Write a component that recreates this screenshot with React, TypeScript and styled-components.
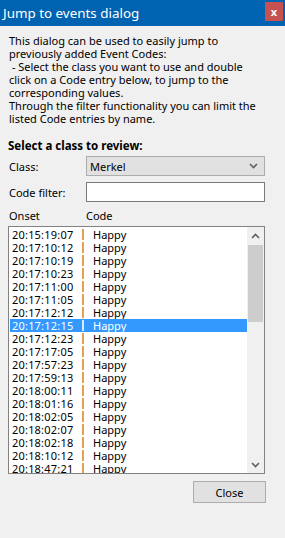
import React from "react";
import styled, { createGlobalStyle } from "styled-components";

const Global = createGlobalStyle`
  html, body { margin: 0; padding: 0; background: #f0f0f0; }
  body { font-family: "Noto Sans", "Open Sans", sans-serif; font-size: 11px; color: #000; }
  * { box-sizing: border-box; }
`;

const Window = styled.div`
  width: 285px;
  height: 538px;
  background: #f0f0f0;
  display: flex;
  flex-direction: column;
  overflow: hidden;
`;

const TitleBar = styled.div`
  height: 26px;
  background: #0063b1;
  display: flex;
  align-items: center;
  justify-content: space-between;
  padding: 0 2px 0 3px;
`;

const Title = styled.div`
  color: #fff;
  font-size: 13.4px;
  line-height: 18px;
`;

const CloseX = styled.div`
  width: 18px;
  height: 19px;
  margin-top: -4px;
  background: #c75050;
  color: #fff;
  font-weight: bold;
  font-size: 11px;
  display: flex;
  align-items: center;
  justify-content: center;
`;

const Body = styled.div`
  display: flex;
  flex-direction: column;
  padding: 8px 20px 0 8px;
`;

const Description = styled.p`
  margin: 0 0 0 1px;
  line-height: 13px;
  white-space: pre-wrap;
`;

const Heading = styled.div`
  margin-top: 14px;
  font-weight: bold;
  font-size: 11.5px;
  line-height: 13px;
`;

const FieldRow = styled.div<{ $gap: number }>`
  display: flex;
  align-items: center;
  margin-top: ${(p) => p.$gap}px;
`;

const Label = styled.div`
  width: 78px;
  padding-left: 1px;
  line-height: 13px;
`;

const Combo = styled.div`
  width: 179px;
  height: 20px;
  background: #e1e1e1;
  border: 1px solid #adadad;
  display: flex;
  align-items: center;
  justify-content: space-between;
  padding: 0 6px 0 3px;
`;

const TextInput = styled.div`
  width: 179px;
  height: 20px;
  background: #fff;
  border: 1px solid #7a7a7a;
`;

const Headers = styled.div`
  display: flex;
  margin-top: 7px;
  line-height: 13px;
`;

const List = styled.div`
  margin-top: 4px;
  width: 257px;
  height: 248px;
  border: 1px solid #828282;
  background: #fff;
  display: flex;
  overflow: hidden;
`;

const Rows = styled.div`
  flex: 1;
  padding: 1px 0 0 1px;
  display: flex;
  flex-direction: column;
`;

const Row = styled.div<{ $selected?: boolean }>`
  height: 13px;
  flex: none;
  display: flex;
  align-items: center;
  background: ${(p) => (p.$selected ? "#3399ff" : "transparent")};
  color: ${(p) => (p.$selected ? "#fff" : "#000")};
  line-height: 13px;
`;

const Time = styled.span`
  width: 72px;
  padding-left: 2px;
  letter-spacing: 0.2px;
`;

const Sep = styled.span<{ $selected?: boolean }>`
  width: 2px;
  height: 11px;
  background: ${(p) => (p.$selected ? "#d8ecff" : "#e8a050")};
`;

const Code = styled.span`
  padding-left: 9px;
`;

const ScrollBar = styled.div`
  width: 17px;
  background: #f0f0f0;
  display: flex;
  flex-direction: column;
`;

const ArrowBtn = styled.div`
  height: 17px;
  display: flex;
  align-items: center;
  justify-content: center;
`;

const Thumb = styled.div`
  height: 77px;
  margin: 1px 1px 0 1px;
  background: #cdcdcd;
`;

const Track = styled.div`
  flex: 1;
`;

const Footer = styled.div`
  display: flex;
  justify-content: flex-end;
  margin-top: 7px;
  width: 258px;
`;

const Button = styled.div`
  width: 73px;
  height: 22px;
  background: #e1e1e1;
  border: 1px solid #adadad;
  display: flex;
  align-items: center;
  justify-content: center;
`;

const Chevron = ({ dir }: { dir: "up" | "down" }) => (
  <svg width="9" height="6" viewBox="0 0 9 6">
    <path
      d={dir === "down" ? "M1 1 L4.5 4.5 L8 1" : "M1 5 L4.5 1.5 L8 5"}
      stroke="#606060"
      strokeWidth="1.6"
      fill="none"
    />
  </svg>
);

const times = [
  "20:15:19:07",
  "20:17:10:12",
  "20:17:10:19",
  "20:17:10:23",
  "20:17:11:00",
  "20:17:11:05",
  "20:17:12:12",
  "20:17:12:15",
  "20:17:12:23",
  "20:17:17:05",
  "20:17:57:23",
  "20:17:59:13",
  "20:18:00:11",
  "20:18:01:16",
  "20:18:02:05",
  "20:18:02:07",
  "20:18:02:18",
  "20:18:10:12",
  "20:18:47:21",
];

export default function App() {
  return (
    <Window>
      <Global />
      <TitleBar>
        <Title>Jump to events dialog</Title>
        <CloseX>x</CloseX>
      </TitleBar>
      <Body>
        <Description>
          {"This dialog can be used to easily jump to\npreviously added Event Codes:\n - Select the class you want to use and double\nclick on a Code entry below, to jump to the\ncorresponding values.\nThrough the filter functionality you can limit the\nlisted Code entries by name."}
        </Description>
        <Heading>Select a class to review:</Heading>
        <FieldRow $gap={4}>
          <Label>Class:</Label>
          <Combo>
            <span>Merkel</span>
            <Chevron dir="down" />
          </Combo>
        </FieldRow>
        <FieldRow $gap={6}>
          <Label>Code filter:</Label>
          <TextInput />
        </FieldRow>
        <Headers>
          <Label>Onset</Label>
          <span>Code</span>
        </Headers>
        <List>
          <Rows>
            {times.map((t, i) => (
              <Row key={i} $selected={i === 7}>
                <Time>{t}</Time>
                <Sep $selected={i === 7} />
                <Code>Happy</Code>
              </Row>
            ))}
          </Rows>
          <ScrollBar>
            <ArrowBtn>
              <Chevron dir="up" />
            </ArrowBtn>
            <Thumb />
            <Track />
            <ArrowBtn>
              <Chevron dir="down" />
            </ArrowBtn>
          </ScrollBar>
        </List>
        <Footer>
          <Button>Close</Button>
        </Footer>
      </Body>
    </Window>
  );
}
